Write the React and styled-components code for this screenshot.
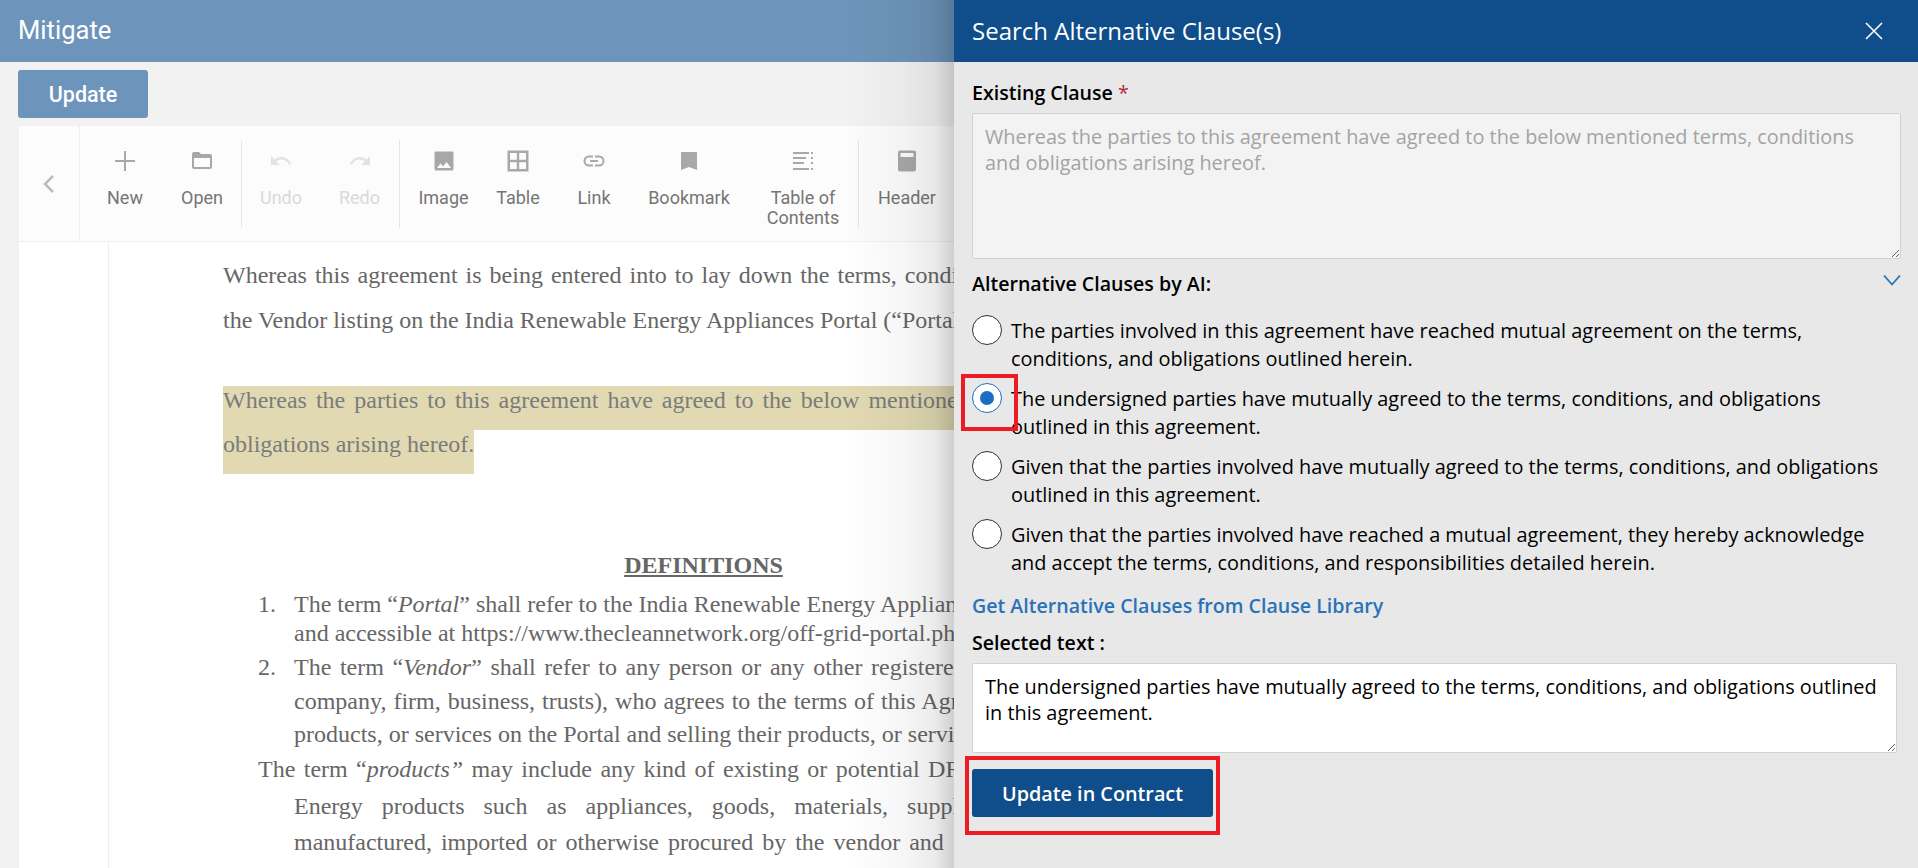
import React from "react";
import styled, { createGlobalStyle } from "styled-components";

const GlobalStyle = createGlobalStyle`
  html, body {
    margin: 0;
    padding: 0;
    height: 100%;
    overflow: hidden;
    background: #f2f2f2;
  }
`;

const Page = styled.div`
  position: relative;
  width: 1918px;
  height: 868px;
  overflow: hidden;
  background: #f2f2f2;
  font-family: Roboto, sans-serif;
`;

const TopBar = styled.div`
  height: 62px;
  background: #6d94ba;
  color: #fff;
  font-size: 25.6px;
  line-height: 60px;
  padding-left: 18px;
`;

const UpdateRow = styled.div`
  padding: 8px 0 8px 18px;
  height: 48px;
`;

const UpdateButton = styled.button`
  width: 130px;
  height: 48px;
  border: 0;
  border-radius: 3px;
  background: #6d94ba;
  color: #fff;
  font-family: Roboto, sans-serif;
  font-weight: 500;
  font-size: 21.5px;
`;

const Editor = styled.div`
  margin-left: 19px;
  background: #fff;
`;

const Toolbar = styled.div`
  display: flex;
  height: 115px;
  background: #fcfcfc;
  border-bottom: 1px solid #f0f0f0;
`;

const NavCell = styled.div`
  width: 60px;
  border-right: 1px solid #efefef;
  display: flex;
  align-items: center;
  justify-content: center;
  padding-bottom: 1px;
  svg {
    margin-top: 1px;
  }
`;

const Tools = styled.div`
  display: flex;
  padding: 14px 0 0 7px;
`;

const Tool = styled.div`
  width: ${(p) => p.$w}px;
  margin-left: ${(p) => p.$ml || 0}px;
  height: 88px;
  box-sizing: border-box;
  border-right: ${(p) => (p.$sep ? "1px solid #e6e6e6" : "0")};
  display: flex;
  flex-direction: column;
  align-items: center;
  color: ${(p) => (p.$off ? "#d9d9d9" : "#757575")};
  font-size: 18px;
  line-height: 20px;
  text-align: center;
`;

const ToolIcon = styled.div`
  height: 24px;
  width: 24px;
  margin: 9px 0 15px;
  svg {
    display: block;
  }
`;

const DocArea = styled.div`
  display: flex;
  height: 626px;
  overflow: hidden;
`;

const Gutter = styled.div`
  width: 89px;
  border-right: 1px solid #eee;
  flex: none;
`;

const Sheet = styled.div`
  padding: 11px 0 0 114px;
  width: 961px;
  flex: none;
  font-family: "Liberation Serif", serif;
  font-size: 24px;
  color: #666;
`;

const Line = styled.div`
  height: ${(p) => p.$h || 24}px;
  line-height: ${(p) => p.$h || 24}px;
  margin-top: ${(p) => p.$mt || 0}px;
  padding-left: ${(p) => p.$indent || 0}px;
  white-space: nowrap;
  word-spacing: ${(p) => p.$ws || 0}px;
  display: flex;
`;

const Marked = styled.div`
  width: ${(p) => (p.$short ? "251px" : "1000px")};
  height: 44px;
  line-height: 28px;
  background: #e0d9b2;
  color: #7b7b7b;
  white-space: nowrap;
  word-spacing: ${(p) => p.$ws || 0}px;
  margin-top: ${(p) => p.$mt || 0}px;
`;

const Heading = styled.div`
  margin-top: 72px;
  height: 38px;
  line-height: 38px;
  text-align: center;
  font-weight: 700;
  text-decoration: underline;
`;

const Num = styled.span`
  width: 36px;
  flex: none;
`;

const Drawer = styled.aside`
  position: absolute;
  top: 0;
  right: 0;
  bottom: 0;
  width: 964px;
  background: #e8e8e8;
  font-family: "Open Sans", sans-serif;
  font-size: 19.9px;
  color: #000;
  &::before {
    content: "";
    position: absolute;
    top: 0;
    bottom: 0;
    right: 100%;
    width: 110px;
    background: linear-gradient(
      to right,
      rgba(0, 0, 0, 0),
      rgba(0, 0, 0, 0.035) 55%,
      rgba(0, 0, 0, 0.08) 82%,
      rgba(0, 0, 0, 0.19) 100%
    );
  }
`;

const DrawerHead = styled.header`
  height: 62px;
  background: #0f4e8a;
  color: #fff;
  display: flex;
  align-items: center;
  justify-content: space-between;
  padding: 0 35px 2px 18px;
  box-sizing: border-box;
  font-size: 24px;
`;

const CloseIcon = styled.svg`
  width: 18px;
  height: 18px;
  margin-top: 2px;
`;

const DrawerBody = styled.div`
  padding: 18px 17px 0 18px;
`;

const Label = styled.div`
  font-weight: 600;
  line-height: 26px;
  height: 26px;
  display: flex;
  justify-content: space-between;
  font-size: 19.6px;
  margin-top: ${(p) => p.$mt || 0}px;
  span {
    color: #b02a37;
    font-weight: 400;
  }
`;

const Area = styled.textarea`
  display: block;
  box-sizing: border-box;
  width: ${(p) => p.$w}px;
  height: ${(p) => p.$h}px;
  margin-top: 7px;
  padding: 10px 12px;
  border: 1px solid #d2d2d2;
  border-radius: 2px;
  background: ${(p) => (p.$off ? "#f3f3f3" : "#fff")};
  color: ${(p) => (p.$off ? "#a3a3a3" : "#000")};
  font-family: "Open Sans", sans-serif;
  font-size: 19.9px;
  line-height: 26px;
  outline: 0;
`;

const Options = styled.div`
  display: flex;
  flex-direction: column;
  gap: 12px;
  margin-top: 20px;
`;

const Option = styled.label`
  display: flex;
  gap: 9px;
  line-height: 28px;
  height: 56px;
`;

const Radio = styled.span`
  flex: none;
  box-sizing: border-box;
  width: 30px;
  height: 30px;
  margin-top: -2px;
  border-radius: 50%;
  background: #fff;
  border: 1px solid ${(p) => (p.$on ? "#1b6ec2" : "#333")};
  display: flex;
  align-items: center;
  justify-content: center;
  &::after {
    content: "";
    display: ${(p) => (p.$on ? "block" : "none")};
    width: 14px;
    height: 14px;
    border-radius: 50%;
    background: #1b6ec2;
  }
`;

const LibraryLink = styled.a`
  display: block;
  margin-top: 16px;
  height: 26px;
  line-height: 26px;
  color: #2a72b8;
  font-weight: 600;
  font-size: 19.6px;
`;

const SubmitButton = styled.button`
  display: block;
  width: 241px;
  height: 48px;
  margin-top: 16px;
  border: 0;
  border-radius: 3px;
  background: #0f4e8a;
  color: #fff;
  font-family: "Open Sans", sans-serif;
  font-weight: 600;
  font-size: 19.8px;
`;

const RedMark = styled.div`
  position: absolute;
  box-sizing: border-box;
  left: ${(p) => p.$x}px;
  top: ${(p) => p.$y}px;
  width: ${(p) => p.$w}px;
  height: ${(p) => p.$h}px;
  border: 4px solid #ec1c24;
  pointer-events: none;
`;

const Grey = ({ color = "#a8a8a8", children }) => (
  <svg width="24" height="24" viewBox="0 0 24 24" fill={color}>
    {children}
  </svg>
);

const icons = {
  plus: (
    <Grey>
      <path d="M11 2h2v9h9v2h-9v9h-2v-9H2v-2h9z" />
    </Grey>
  ),
  folder: (
    <Grey>
      <path d="M2 5c0-1 .6-2 2-2h5l2 2h9c1.200 0 2 .8 2 2v11c0 1.200-.8 2-2 2H4c-1.200 0-2-.8-2-2zm2 4v9h16V9z" fillRule="evenodd" />
    </Grey>
  ),
  undo: (
    <Grey color="#e2e2e2">
      <path d="M12.500 8c-2.700 0-5.100 1-7 2.600L2 7v9h9l-3.600-3.600c1.400-1.200 3.200-1.900 5.100-1.900 3.400 0 6.300 2.200 7.300 5.300l2.300-.8C20.800 11.900 17 8 12.500 8z" />
    </Grey>
  ),
  redo: (
    <Grey color="#e2e2e2">
      <path d="M11.500 8c2.700 0 5.100 1 7 2.600L22 7v9h-9l3.600-3.600c-1.400-1.200-3.200-1.900-5.100-1.900-3.400 0-6.300 2.200-7.300 5.300l-2.300-.8C3.200 11.900 7 8 11.500 8z" />
    </Grey>
  ),
  image: (
    <Grey>
      <path d="M4 2.500h16c.8 0 1.500.7 1.500 1.500v16c0 .8-.7 1.500-1.500 1.500H4c-.8 0-1.500-.7-1.500-1.500V4c0-.8.7-1.500 1.500-1.500zM5 19h14l-4.500-6-3.500 4.500-2.500-3z" fillRule="evenodd" />
    </Grey>
  ),
  table: (
    <Grey>
      <path d="M1.500 1.500h21v21h-21zM4 4v6.800h6.800V4zm9.200 0v6.800H20V4zM4 13.200V20h6.800v-6.800zm9.200 0V20H20v-6.800z" fillRule="evenodd" />
    </Grey>
  ),
  link: (
    <Grey>
      <path d="M7 6.500h4v2H7a3.500 3.500 0 000 7h4v2H7a5.500 5.500 0 010-11zm6 0h4a5.500 5.500 0 010 11h-4v-2h4a3.500 3.500 0 000-7h-4zM8 11h8v2H8z" />
    </Grey>
  ),
  bookmark: (
    <Grey>
      <path d="M5 3h14c.6 0 1 .4 1 1v17l-8-3-8 3V4c0-.6.4-1 1-1z" />
    </Grey>
  ),
  toc: (
    <Grey>
      <path d="M2 3h16v2H2zM20 3h2v2h-2zM2 8h13v2H2zM20 8h2v2h-2zM2 13h11v2H2zM20 13h2v2h-2zM2 19h16v2H2zM20 19h2v2h-2z" />
    </Grey>
  ),
  header: (
    <Grey>
      <path d="M5 1.500h14c1.100 0 2 .9 2 2v17c0 1.100-.9 2-2 2H5c-1.100 0-2-.9-2-2v-17c0-1.100.9-2 2-2zM5.500 4v4h13V4z" fillRule="evenodd" />
    </Grey>
  ),
};

const tools = [
  { label: "New", icon: "plus", w: 76 },
  { label: "Open", icon: "folder", w: 79, sep: true },
  { label: "Undo", icon: "undo", w: 78, off: true },
  { label: "Redo", icon: "redo", w: 80, off: true, sep: true },
  { label: "Image", icon: "image", w: 87 },
  { label: "Table", icon: "table", w: 62 },
  { label: "Link", icon: "link", w: 90 },
  { label: "Bookmark", icon: "bookmark", w: 100 },
  { label: "Table of Contents", icon: "toc", w: 111, ml: 9, sep: true },
  { label: "Header", icon: "header", w: 96 },
];

const clauses = [
  "The parties involved in this agreement have reached mutual agreement on the terms, conditions, and obligations outlined herein.",
  "The undersigned parties have mutually agreed to the terms, conditions, and obligations outlined in this agreement.",
  "Given that the parties involved have mutually agreed to the terms, conditions, and obligations outlined in this agreement.",
  "Given that the parties involved have reached a mutual agreement, they hereby acknowledge and accept the terms, conditions, and responsibilities detailed herein.",
];

export default function App() {
  return (
    <Page>
      <GlobalStyle />
      <TopBar>Mitigate</TopBar>
      <UpdateRow>
        <UpdateButton>Update</UpdateButton>
      </UpdateRow>
      <Editor>
        <Toolbar>
          <NavCell>
            <svg width="14" height="20" viewBox="0 0 14 20" fill="none" stroke="#bdbdbd" strokeWidth="2.5">
              <path d="M11 2 3 10l8 8" />
            </svg>
          </NavCell>
          <Tools>
            {tools.map((t) => (
              <Tool key={t.label} $w={t.w} $ml={t.ml} $sep={t.sep} $off={t.off}>
                <ToolIcon>{icons[t.icon]}</ToolIcon>
                {t.label === "Table of Contents" ? (
                  <div>
                    Table of
                    <br />
                    Contents
                  </div>
                ) : (
                  t.label
                )}
              </Tool>
            ))}
          </Tools>
        </Toolbar>
        <DocArea>
          <Gutter />
          <Sheet>
            <Line $h={45} $ws={2}>Whereas this agreement is being entered into to lay down the terms, conditions</Line>
            <Line $h={45}>the Vendor listing on the India Renewable Energy Appliances Portal (“Portal”)</Line>
            <Marked $mt={43} $ws={3}>Whereas the parties to this agreement have agreed to the below mentioned terms</Marked>
            <Marked $short>obligations arising hereof.</Marked>
            <Heading>DEFINITIONS</Heading>
            <Line $mt={8} $indent={35}>
              <Num>1.</Num>
              <span>
                The term “<em>Portal</em>” shall refer to the India Renewable Energy Appliances
              </span>
            </Line>
            <Line $mt={5} $indent={71}>and accessible at https://www.thecleannetwork.org/off-grid-portal.php</Line>
            <Line $mt={10} $indent={35} $ws={2.6}>
              <Num>2.</Num>
              <span>
                The term “<em>Vendor</em>” shall refer to any person or any other registered
              </span>
            </Line>
            <Line $mt={10} $indent={71} $ws={1}>company, firm, business, trusts), who agrees to the terms of this Agreement</Line>
            <Line $mt={9} $indent={71}>products, or services on the Portal and selling their products, or services</Line>
            <Line $mt={11} $indent={35} $ws={2.4}>
              <span>
                The term “<em>products”</em> may include any kind of existing or potential DRE
              </span>
            </Line>
            <Line $mt={13} $indent={71} $ws={13}>Energy products such as appliances, goods, materials, supplies</Line>
            <Line $mt={12} $indent={71} $ws={3}>manufactured, imported or otherwise procured by the vendor and</Line>
          </Sheet>
        </DocArea>
      </Editor>

      <Drawer>
        <DrawerHead>
          Search Alternative Clause(s)
          <CloseIcon viewBox="0 0 18 18" fill="none" stroke="#fff" strokeWidth="1.6">
            <path d="M1 1l16 16M17 1 1 17" />
          </CloseIcon>
        </DrawerHead>
        <DrawerBody>
          <Label>
            <div>
              Existing Clause <span>*</span>
            </div>
          </Label>
          <Area
            $off
            $w={929}
            $h={146}
            readOnly
            defaultValue="Whereas the parties to this agreement have agreed to the below mentioned terms, conditions and obligations arising hereof."
          />
          <Label $mt={12}>
            Alternative Clauses by AI:
            <svg width="18" height="18" viewBox="0 0 18 18" fill="none" stroke="#2a72b8" strokeWidth="1.8">
              <path d="M1 4.500l8 9 8-9" />
            </svg>
          </Label>
          <Options>
            {clauses.map((c, i) => (
              <Option key={c}>
                <Radio $on={i === 1} />
                <div>{c}</div>
              </Option>
            ))}
          </Options>
          <LibraryLink>Get Alternative Clauses from Clause Library</LibraryLink>
          <Label $mt={11}>Selected text :</Label>
          <Area
            $w={925}
            $h={90}
            readOnly
            defaultValue="The undersigned parties have mutually agreed to the terms, conditions, and obligations outlined in this agreement."
          />
          <SubmitButton>Update in Contract</SubmitButton>
        </DrawerBody>
      </Drawer>

      <RedMark $x={961} $y={374} $w={57} $h={57} />
      <RedMark $x={965} $y={756} $w={255} $h={79} />
    </Page>
  );
}
